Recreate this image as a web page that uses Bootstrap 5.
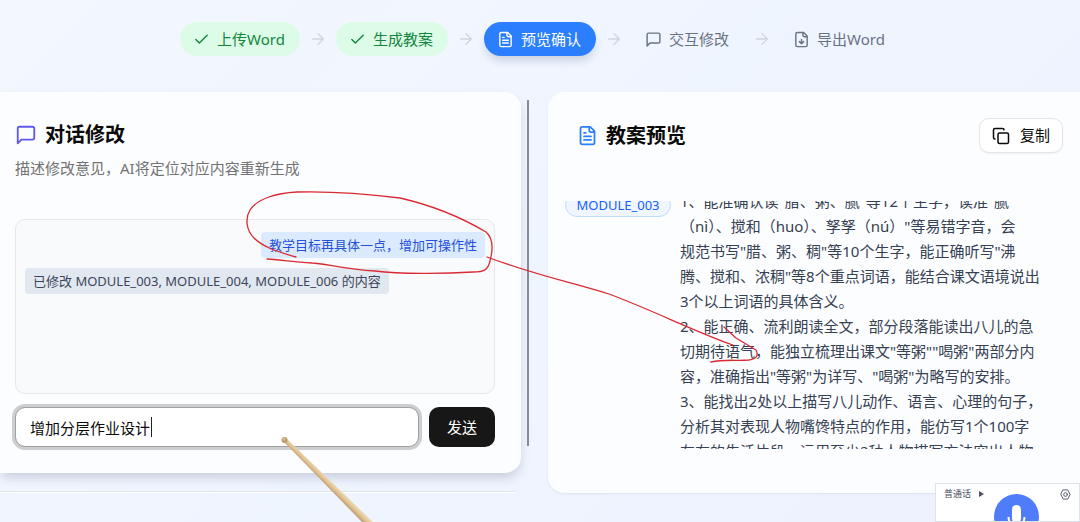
<!DOCTYPE html>
<html lang="zh-CN">
<head>
<meta charset="utf-8">
<meta name="viewport" content="width=device-width, initial-scale=1">
<title>教案预览</title>
<link href="https://cdn.jsdelivr.net/npm/bootstrap@5.3.0/dist/css/bootstrap.min.css" rel="stylesheet">
<style>
  body { font-family: "Noto Sans", "Noto Sans CJK SC", sans-serif; font-size: 15px; line-height: 24px; color: #0a0a0a; min-height: 100vh; background: linear-gradient(135deg, #f3f7fe 0%, #eff5ff 50%, #eef1fe 100%); overflow: hidden; }
  svg.ico { fill: none; stroke: currentColor; stroke-width: 2; stroke-linecap: round; stroke-linejoin: round; flex: none; }
  .steps { padding-top: 22px; margin-bottom: 36px; gap: 10px; }
  .step { height: 34px; padding: 0 15px 0 13px; gap: 7px; border-radius: 18px; color: #6a7282; text-decoration: none; white-space: nowrap; }
  .step.done { background: #dcfce7; color: #138540; }
  .step.active { background: #2b7fff; color: #fff; box-shadow: 0 6px 10px -2px rgba(30, 50, 90, .2); }
  .arrow { color: #d1d5dc; }
  .workspace { display: grid; grid-template-columns: minmax(0, 521fr) 27px minmax(0, 532fr); align-items: start; }
  .panel { background: #fcfdfe; }
  .chat-panel { border-radius: 0 16px 16px 0; padding: 30px 26px 26px 15px; box-shadow: 0 6px 12px -2px rgba(40, 50, 80, .22); }
  .below { height: 19px; margin-right: 5px; border-bottom: 1px solid #dfe3eb; box-shadow: 0 1px #fff; }
  .preview-panel { border-radius: 16px 0 0 16px; padding: 26px 17px 44px; box-shadow: 0 1px 2px rgba(40, 50, 80, .08); }
  .divider { height: 346px; margin-top: 8px; border-left: 2px solid #858b98; justify-self: start; margin-left: 6px; }
  h2 { font-size: 20px; line-height: 26px; font-weight: 700; margin: 0; }
  .desc { color: #737373; margin: 8px 0 39px; }
  .chat-log { height: 175px; padding: 12px 9px; border: 1px solid #e5e7eb; border-radius: 10px; background: #f9fafb; gap: 10px; font-size: 13px; line-height: 18px; }
  .msg { padding: 4px 8px; border-radius: 4px; background: #e2e8f0; color: #3c4658; }
  .msg.mine { background: #dbeafe; color: #2450dd; }
  .composer { margin-top: 13px; gap: 10px; }
  .composer .form-control { height: 40px; padding: 0 14px; font-size: 15px; color: #0a0a0a; border: 1px solid #a1a1a1; border-radius: 10px; box-shadow: 0 0 0 3px #cdcecf; }
  .composer .field { position: relative; }
  .caret { position: absolute; left: 136px; top: 10px; width: 1px; height: 20px; background: #222; }
  .send { width: 66px; height: 40px; padding: 0; border-radius: 10px; background: #171717; color: #fff; font-size: 15px; }
  .copy { height: 35px; padding: 0 12px; gap: 10px; border: 1px solid #e5e5e5; border-radius: 10px; background: #fff; color: #0a0a0a; font-size: 15px; box-shadow: 0 1px 2px rgba(0, 0, 0, .05); }
  .scroller { height: 248px; margin-top: 48px; overflow: hidden; }
  .lesson { gap: 9px; margin-top: -12px; color: #364153; line-height: 25px; }
  .module-tag { width: 106px; height: 24px; margin-top: 4px; border: 1px solid #bedbff; border-radius: 12px; background: #eff6ff; color: #155dfc; font-size: 13px; line-height: 22px; text-align: center; flex: none; }
  .lesson p { margin: 0; white-space: nowrap; }
  .ink { position: absolute; left: 0; top: 0; pointer-events: none; }
  .voice { position: fixed; right: 0; bottom: 0; width: 145px; height: 39px; background: #fff; border: 1px solid #dfe2ea; overflow: hidden; font-size: 9px; line-height: 20px; color: #4b5060; }
  .voice .mic { position: absolute; left: 58px; top: 10px; width: 45px; height: 45px; padding: 0; border: 0; border-radius: 50%; background: #4f7cf9; }
  .voice .mic svg { position: absolute; left: 11px; top: 9px; }
</style>
</head>
<body class="position-relative">
<svg width="0" height="0" class="position-absolute" aria-hidden="true">
  <symbol id="check" viewBox="0 0 24 24"><path d="M20 6 9 17l-5-5"/></symbol>
  <symbol id="right" viewBox="0 0 24 24"><path d="M4 12h16M12 4l8 8-8 8"/></symbol>
  <symbol id="doc" viewBox="0 0 24 24"><path d="M15 2H6a2 2 0 0 0-2 2v16a2 2 0 0 0 2 2h12a2 2 0 0 0 2-2V7zM14 2v4a2 2 0 0 0 2 2h4M10 9H8M16 13H8M16 17H8"/></symbol>
  <symbol id="bubble" viewBox="0 0 24 24"><path d="M21 15a2 2 0 0 1-2 2H7l-4 4V5a2 2 0 0 1 2-2h14a2 2 0 0 1 2 2z"/></symbol>
  <symbol id="down" viewBox="0 0 24 24"><path d="M15 2H6a2 2 0 0 0-2 2v16a2 2 0 0 0 2 2h12a2 2 0 0 0 2-2V7zM14 2v4a2 2 0 0 0 2 2h4M12 18v-6M9 15l3 3 3-3"/></symbol>
</svg>

<nav class="steps d-flex justify-content-center align-items-center" aria-label="步骤">
  <a href="#" class="step done d-flex align-items-center"><svg class="ico" width="17" height="17"><use href="#check"/></svg>上传Word</a>
  <svg class="ico arrow" width="16" height="16"><use href="#right"/></svg>
  <a href="#" class="step done d-flex align-items-center"><svg class="ico" width="17" height="17"><use href="#check"/></svg>生成教案</a>
  <svg class="ico arrow" width="16" height="16"><use href="#right"/></svg>
  <a href="#" class="step active d-flex align-items-center"><svg class="ico" width="17" height="17"><use href="#doc"/></svg>预览确认</a>
  <svg class="ico arrow" width="16" height="16"><use href="#right"/></svg>
  <a href="#" class="step d-flex align-items-center"><svg class="ico" width="17" height="17"><use href="#bubble"/></svg>交互修改</a>
  <svg class="ico arrow" width="16" height="16"><use href="#right"/></svg>
  <a href="#" class="step d-flex align-items-center"><svg class="ico" width="17" height="17"><use href="#down"/></svg>导出Word</a>
</nav>

<main class="workspace">
  <div>
    <section class="panel chat-panel">
      <div class="d-flex align-items-center gap-2">
        <svg class="ico" width="22" height="22" style="color:#6058f0"><use href="#bubble"/></svg>
        <h2>对话修改</h2>
      </div>
      <p class="desc">描述修改意见，AI将定位对应内容重新生成</p>
      <div class="chat-log d-flex flex-column">
        <div class="msg mine align-self-end">教学目标再具体一点，增加可操作性</div>
        <div class="msg align-self-start">已修改 MODULE_003, MODULE_004, MODULE_006 的内容</div>
      </div>
      <form class="composer d-flex">
        <div class="field flex-grow-1">
          <input type="text" class="form-control" aria-label="修改意见" value="增加分层作业设计">
          <span class="caret"></span>
        </div>
        <button type="button" class="btn send">发送</button>
      </form>
    </section>
    <div class="below"></div>
  </div>
  <div class="divider"></div>
  <section class="panel preview-panel">
    <div class="d-flex align-items-center justify-content-between ps-2">
      <div class="d-flex align-items-center gap-2">
        <svg class="ico ms-1" width="21" height="21" style="color:#2b7fff"><use href="#doc"/></svg>
        <h2>教案预览</h2>
      </div>
      <button type="button" class="btn copy d-flex align-items-center">
        <svg class="ico" width="18" height="18" viewBox="0 0 24 24"><rect x="8" y="8" width="14" height="14" rx="2"/><path d="M4 16c-1.100 0-2-.9-2-2V4c0-1.100.9-2 2-2h10c1.100 0 2 .9 2 2"/></svg>复制
      </button>
    </div>
    <div class="scroller">
      <div class="lesson d-flex align-items-start">
        <span class="module-tag">MODULE_003</span>
        <div>
          <p>1、能准确认读"腊、粥、腻"等12个生字，读准"腻<br>（nì）、搅和（huo）、孥孥（nú）"等易错字音，会<br>规范书写"腊、粥、稠"等10个生字，能正确听写"沸<br>腾、搅和、浓稠"等8个重点词语，能结合课文语境说出<br>3个以上词语的具体含义。</p>
          <p>2、能正确、流利朗读全文，部分段落能读出八儿的急<br>切期待语气，能独立梳理出课文"等粥""喝粥"两部分内<br>容，准确指出"等粥"为详写、"喝粥"为略写的安排。</p>
          <p>3、能找出2处以上描写八儿动作、语言、心理的句子，<br>分析其对表现人物嘴馋特点的作用，能仿写1个100字<br>左右的生活片段，运用至少2种人物描写方法突出人物</p>
        </div>
      </div>
    </div>
  </section>
</main>

<svg class="ink" width="1080" height="522" viewBox="0 0 1080 522" aria-hidden="true">
  <defs><linearGradient id="wood" gradientUnits="userSpaceOnUse" x1="323" y1="485" x2="330" y2="478"><stop offset="0" stop-color="#a98a5e"/><stop offset=".5" stop-color="#e0c294"/><stop offset="1" stop-color="#f3e2c0"/></linearGradient></defs>
  <g fill="none" stroke="#d92a33" stroke-width="1.300" stroke-linecap="round" stroke-linejoin="round">
    <path d="M296 257C278 252 263 247 254 238C246 230 245 218 250 210C257 199 276 193 297 192C333 191 368 194 400 198C435 206 464 219 486 232C494 239 493 250 490 261C488 270 484 272 473 272C442 274 400 274 375 271C344 269 323 263 312 263C294 262 281 260 267 259"/>
    <path d="M487 257C535 275 574 283 609 294C652 310 698 333 733 345"/>
    <path d="M724 327L736 338L756 350C759 356 756 359 749 360C736 361 724 359 711 362"/>
  </g>
  <path d="M283 441L286 438L373 522L362 522Z" fill="url(#wood)"/>
  <circle cx="284.500" cy="440" r="3" fill="#bd9c6c"/><circle cx="284" cy="439" r="1.500" fill="#d9bd8b"/>
</svg>

<aside class="voice">
  <div class="d-flex align-items-center px-2">
    <span>普通话</span>
    <svg class="ms-2" width="5" height="6" viewBox="0 0 5 6"><path d="M0 0l5 3-5 3z" fill="#4b5060"/></svg>
    <svg class="ico ms-auto" width="11" height="11" viewBox="0 0 24 24"><path d="M7 2h10l5 10-5 10H7L2 12z"/><circle cx="12" cy="12" r="4"/></svg>
  </div>
  <button type="button" class="mic" aria-label="语音输入">
    <svg width="24" height="30" viewBox="0 0 24 30"><rect x="7" y="2" width="9" height="18" rx="4.500" fill="#fff"/><path d="M3.500 14c0 12 16 12 16 0M11.500 23v5" fill="none" stroke="#fff" stroke-width="2"/></svg>
  </button>
</aside>
<script src="https://cdn.jsdelivr.net/npm/bootstrap@5.3.0/dist/js/bootstrap.bundle.min.js"></script>
</body>
</html>
